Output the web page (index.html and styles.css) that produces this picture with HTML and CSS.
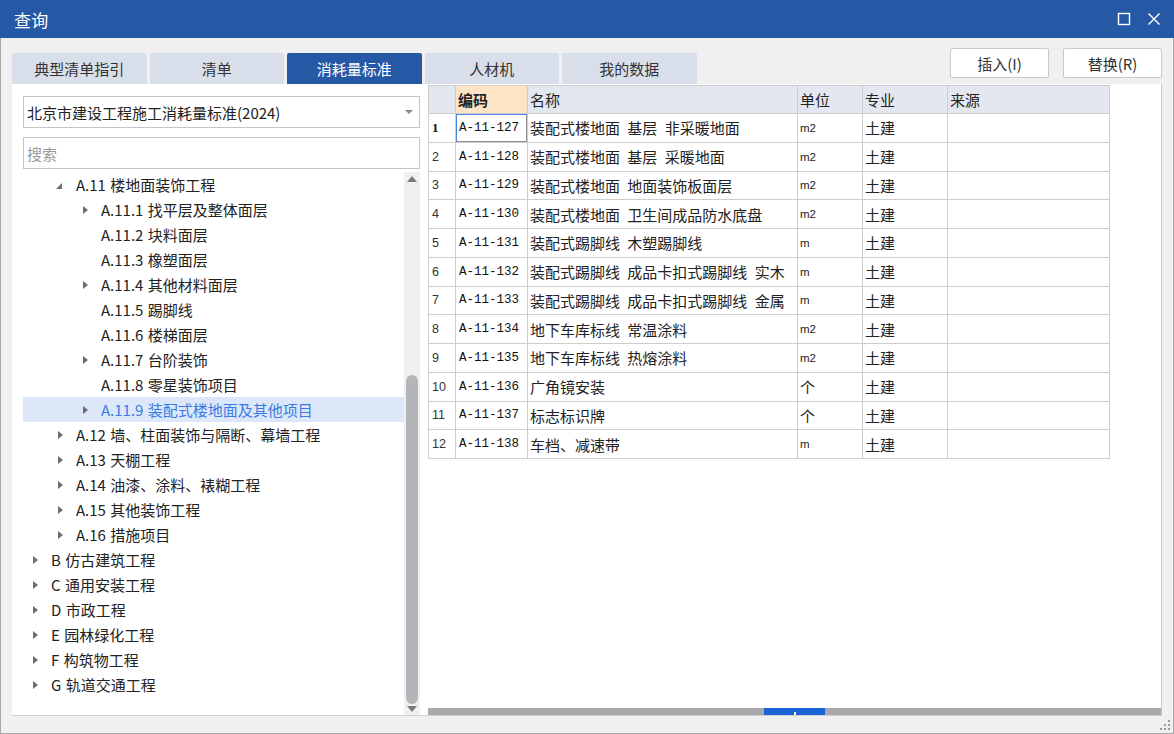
FILE: index.html
```html
<!DOCTYPE html>
<html lang="zh">
<head>
<meta charset="utf-8">
<title>查询</title>
<link rel="stylesheet" href="styles.css">
</head>
<body>
<div class="window">
  <div class="titlebar">
    <span class="title">查询</span>
    <div class="winbtns">
      <svg class="wb" width="14" height="14" viewBox="0 0 14 14"><rect x="1.5" y="1.5" width="11" height="11" fill="none" stroke="#fff" stroke-width="1.4"/></svg>
      <svg class="wb" width="14" height="14" viewBox="0 0 14 14"><path d="M1.5 1.5 L12.5 12.5 M12.5 1.5 L1.5 12.5" stroke="#fff" stroke-width="1.4"/></svg>
    </div>
  </div>
  <div class="body">
    <div class="topbar">
      <div class="tabs">
        <div class="tab">典型清单指引</div>
        <div class="tab">清单</div>
        <div class="tab active">消耗量标准</div>
        <div class="tab">人材机</div>
        <div class="tab">我的数据</div>
      </div>
      <div class="actions">
        <button class="btn">插入(I)</button>
        <button class="btn">替换(R)</button>
      </div>
    </div>
    <div class="panel">
      <div class="left">
        <div class="select">
          <span>北京市建设工程施工消耗量标准(2024)</span>
          <svg width="8" height="5" viewBox="0 0 8 5"><path d="M0 0 L8 0 L4 4 Z" fill="#8a8a8a"/></svg>
        </div>
        <div class="search">搜索</div>
        <div class="treewrap">
          <div class="tree">
            <div class="node l2"><span class="arr open"></span>A.11 楼地面装饰工程</div>
            <div class="node l3"><span class="arr"></span>A.11.1 找平层及整体面层</div>
            <div class="node l3"><span class="arr none"></span>A.11.2 块料面层</div>
            <div class="node l3"><span class="arr none"></span>A.11.3 橡塑面层</div>
            <div class="node l3"><span class="arr"></span>A.11.4 其他材料面层</div>
            <div class="node l3"><span class="arr none"></span>A.11.5 踢脚线</div>
            <div class="node l3"><span class="arr none"></span>A.11.6 楼梯面层</div>
            <div class="node l3"><span class="arr"></span>A.11.7 台阶装饰</div>
            <div class="node l3"><span class="arr none"></span>A.11.8 零星装饰项目</div>
            <div class="node l3 sel"><span class="arr"></span>A.11.9 装配式楼地面及其他项目</div>
            <div class="node l2"><span class="arr"></span>A.12 墙、柱面装饰与隔断、幕墙工程</div>
            <div class="node l2"><span class="arr"></span>A.13 天棚工程</div>
            <div class="node l2"><span class="arr"></span>A.14 油漆、涂料、裱糊工程</div>
            <div class="node l2"><span class="arr"></span>A.15 其他装饰工程</div>
            <div class="node l2"><span class="arr"></span>A.16 措施项目</div>
            <div class="node l1"><span class="arr"></span>B 仿古建筑工程</div>
            <div class="node l1"><span class="arr"></span>C 通用安装工程</div>
            <div class="node l1"><span class="arr"></span>D 市政工程</div>
            <div class="node l1"><span class="arr"></span>E 园林绿化工程</div>
            <div class="node l1"><span class="arr"></span>F 构筑物工程</div>
            <div class="node l1"><span class="arr"></span>G 轨道交通工程</div>
          </div>
          <div class="vscroll">
            <svg class="sarrow" width="10" height="6" viewBox="0 0 10 6"><path d="M0 6 L10 6 L5 0 Z" fill="#7a7a7a"/></svg>
            <div class="vtrack"><div class="vthumb"></div></div>
            <svg class="sarrow" width="10" height="6" viewBox="0 0 10 6"><path d="M0 0 L10 0 L5 6 Z" fill="#7a7a7a"/></svg>
          </div>
        </div>
      </div>
      <div class="right">
        <div class="gridarea">
          <table class="grid">
            <colgroup>
              <col class="c0"><col class="c1"><col class="c2"><col class="c3"><col class="c4"><col class="c5">
            </colgroup>
            <thead>
              <tr><th></th><th class="hsel">编码</th><th>名称</th><th>单位</th><th>专业</th><th>来源</th></tr>
            </thead>
            <tbody>
              <tr><td class="rn first">1</td><td class="code focus">A-11-127</td><td class="name">装配式楼地面 基层 非采暖地面</td><td class="unit">m2</td><td>土建</td><td></td></tr>
              <tr><td class="rn">2</td><td class="code">A-11-128</td><td class="name">装配式楼地面 基层 采暖地面</td><td class="unit">m2</td><td>土建</td><td></td></tr>
              <tr><td class="rn">3</td><td class="code">A-11-129</td><td class="name">装配式楼地面 地面装饰板面层</td><td class="unit">m2</td><td>土建</td><td></td></tr>
              <tr><td class="rn">4</td><td class="code">A-11-130</td><td class="name">装配式楼地面 卫生间成品防水底盘</td><td class="unit">m2</td><td>土建</td><td></td></tr>
              <tr><td class="rn">5</td><td class="code">A-11-131</td><td class="name">装配式踢脚线 木塑踢脚线</td><td class="unit">m</td><td>土建</td><td></td></tr>
              <tr><td class="rn">6</td><td class="code">A-11-132</td><td class="name">装配式踢脚线 成品卡扣式踢脚线 实木</td><td class="unit">m</td><td>土建</td><td></td></tr>
              <tr><td class="rn">7</td><td class="code">A-11-133</td><td class="name">装配式踢脚线 成品卡扣式踢脚线 金属</td><td class="unit">m</td><td>土建</td><td></td></tr>
              <tr><td class="rn">8</td><td class="code">A-11-134</td><td class="name">地下车库标线 常温涂料</td><td class="unit">m2</td><td>土建</td><td></td></tr>
              <tr><td class="rn">9</td><td class="code">A-11-135</td><td class="name">地下车库标线 热熔涂料</td><td class="unit">m2</td><td>土建</td><td></td></tr>
              <tr><td class="rn">10</td><td class="code">A-11-136</td><td class="name">广角镜安装</td><td>个</td><td>土建</td><td></td></tr>
              <tr><td class="rn">11</td><td class="code">A-11-137</td><td class="name">标志标识牌</td><td>个</td><td>土建</td><td></td></tr>
              <tr><td class="rn">12</td><td class="code">A-11-138</td><td class="name">车档、减速带</td><td class="unit">m</td><td>土建</td><td></td></tr>
            </tbody>
          </table>
        </div>
        <div class="hscroll"><div class="hthumb"><span class="grip"></span></div></div>
      </div>
    </div>
    <div class="statusbar">
      <svg class="resize" width="10" height="10" viewBox="0 0 10 10" fill="#9a9a9a">
        <rect x="8" y="0" width="2" height="2"/><rect x="4" y="4" width="2" height="2"/><rect x="8" y="4" width="2" height="2"/>
        <rect x="0" y="8" width="2" height="2"/><rect x="4" y="8" width="2" height="2"/><rect x="8" y="8" width="2" height="2"/>
      </svg>
    </div>
  </div>
</div>
</body>
</html>
```

FILE: styles.css
```css
* { box-sizing: border-box; }
html, body { margin: 0; padding: 0; }
body {
  width: 1174px;
  height: 734px;
  overflow: hidden;
  font-family: "Noto Sans CJK SC", "Noto Sans", sans-serif;
  color: #222;
  background: #f0f0f0;
}
.window {
  width: 1174px;
  height: 734px;
  display: flex;
  flex-direction: column;
  border: 1px solid #a9a9a9;
  border-top: none;
}
.titlebar {
  height: 38px;
  background: #2559a6;
  display: flex;
  align-items: center;
  justify-content: space-between;
  padding: 0 13px 0 14px;
  flex: none;
  margin: 0 -1px;
}
.title {
  color: #fff;
  font-size: 17px;
  letter-spacing: 0.3px;
}
.winbtns { display: flex; gap: 16px; align-items: center; }
.wb { display: block; }

.body {
  flex: 1;
  display: flex;
  flex-direction: column;
  padding: 0 11px 0 11px;
  min-height: 0;
}
.topbar {
  height: 46px;
  display: flex;
  justify-content: space-between;
  flex: none;
}
.tabs {
  display: flex;
  gap: 3px;
  align-items: flex-end;
}
.tab {
  width: 134.5px;
  height: 31px;
  background: #d8dfea;
  border-radius: 2px 2px 0 0;
  display: flex;
  align-items: center;
  justify-content: center;
  font-size: 15px;
  color: #333;
}
.tab.active {
  background: #2559a6;
  color: #fff;
}
.actions {
  display: flex;
  gap: 14px;
  padding-top: 10px;
}
.btn {
  width: 99px;
  height: 30px;
  background: #fff;
  border: 1px solid #c9c9c9;
  border-radius: 2px;
  font-family: "Noto Sans CJK SC", "Noto Sans", sans-serif;
  font-size: 15px;
  color: #333;
  padding: 0;
}

.panel {
  height: 632px;
  flex: none;
  background: #fff;
  display: flex;
  border-right: 1px solid #c8c8c8;
  border-bottom: 1px solid #d0d0d0;
}
.left {
  width: 416px;
  flex: none;
  padding: 12px 8px 0 11px;
  display: flex;
  flex-direction: column;
}
.select {
  height: 32px;
  border: 1px solid #c5c5c5;
  display: flex;
  align-items: center;
  justify-content: space-between;
  padding: 0 6px 0 3px;
  font-size: 15px;
  color: #222;
}
.search {
  height: 32px;
  margin-top: 9px;
  border: 1px solid #c5c5c5;
  display: flex;
  align-items: center;
  padding-left: 3px;
  font-size: 15px;
  color: #9a9a9a;
}
.treewrap {
  flex: 1;
  display: flex;
  margin-top: 3px;
  min-height: 0;
}
.tree {
  flex: 1;
  padding-top: 0;
  overflow: hidden;
}
.node {
  height: 25px;
  display: flex;
  align-items: center;
  font-size: 15px;
  color: #222;
  white-space: pre;
  word-spacing: 1px;
}
.node.l1 { padding-left: 10px; }
.node.l2 { padding-left: 35px; }
.node.l3 { padding-left: 60px; }
.node.sel {
  background: #dce8fa;
  color: #3b7ae0;
}
.arr {
  width: 18px;
  height: 25px;
  flex: none;
  display: inline-flex;
  align-items: center;
  justify-content: flex-start;
}
.arr::before {
  content: "";
  width: 0;
  height: 0;
  border-top: 4px solid transparent;
  border-bottom: 4px solid transparent;
  border-left: 5px solid #6d6d6d;
}
.arr.open::before {
  border: none;
  width: 0;
  height: 0;
  border-left: 6px solid transparent;
  border-bottom: 6px solid #6d6d6d;
  margin-top: 2px;
  margin-left: -2px;
}
.arr.none::before { display: none; }
.node.l3 .arr { width: 18px; }

.vscroll {
  width: 16px;
  flex: none;
  background: #f0f0f0;
  display: flex;
  flex-direction: column;
  align-items: center;
  padding: 4px 0 3px;
}
.sarrow { flex: none; }
.vtrack {
  flex: 1;
  width: 100%;
  padding: 193px 2px 2px;
  display: flex;
}
.vthumb {
  flex: 1;
  background: #b3b5b9;
  border-radius: 6px;
}

.right {
  flex: 1;
  display: flex;
  flex-direction: column;
  min-width: 0;
}
.gridarea {
  flex: 1;
  padding: 1px 0 0 0;
  overflow: hidden;
}
.grid {
  border-collapse: collapse;
  table-layout: fixed;
  width: 681px;
  font-size: 15px;
}
.c0 { width: 27px; }
.c1 { width: 72px; }
.c2 { width: 270px; }
.c3 { width: 65px; }
.c4 { width: 85px; }
.c5 { width: 162px; }
.grid th, .grid td {
  border: 1px solid #cdcdcd;
  height: 28.75px;
  padding: 0 2px;
  text-align: left;
  white-space: nowrap;
  overflow: hidden;
}
.grid th {
  background: #e3e8f0;
  font-weight: normal;
  height: 28px;
}
.grid th.hsel {
  background: #fde4c6;
  font-weight: bold;
}
.grid td.name {
  word-spacing: 4px;
}
.grid td.rn {
  font-family: "Liberation Sans", sans-serif;
  font-size: 12.5px;
  color: #333;
  padding-left: 3px;
}
.grid td.rn.first {
  font-family: "Liberation Serif", serif;
  font-weight: bold;
  font-size: 13px;
  color: #111;
}
.grid td.code {
  font-family: "Liberation Mono", monospace;
  font-size: 12.5px;
  color: #111;
  padding-left: 3px;
}
.grid td.focus {
  box-shadow: inset 1px 1px 0 #4a86d8, inset -1px -1px 0 #8f8f8f;
}
.grid td.unit {
  font-family: "Liberation Sans", sans-serif;
  font-size: 11.5px;
}
.hscroll {
  height: 7px;
  background: #a8a9ab;
  flex: none;
  position: relative;
}
.hthumb {
  position: absolute;
  left: 336px;
  top: 0;
  width: 61px;
  height: 7px;
  background: #1c63d6;
  display: flex;
  justify-content: center;
  align-items: flex-end;
}
.grip {
  width: 2px;
  height: 3px;
  background: #fff;
}
.statusbar {
  flex: 1;
  display: flex;
  justify-content: flex-end;
  align-items: flex-end;
  padding: 0 0 3px 0;
  margin-right: -8px;
}
.resize { display: block; }
```
